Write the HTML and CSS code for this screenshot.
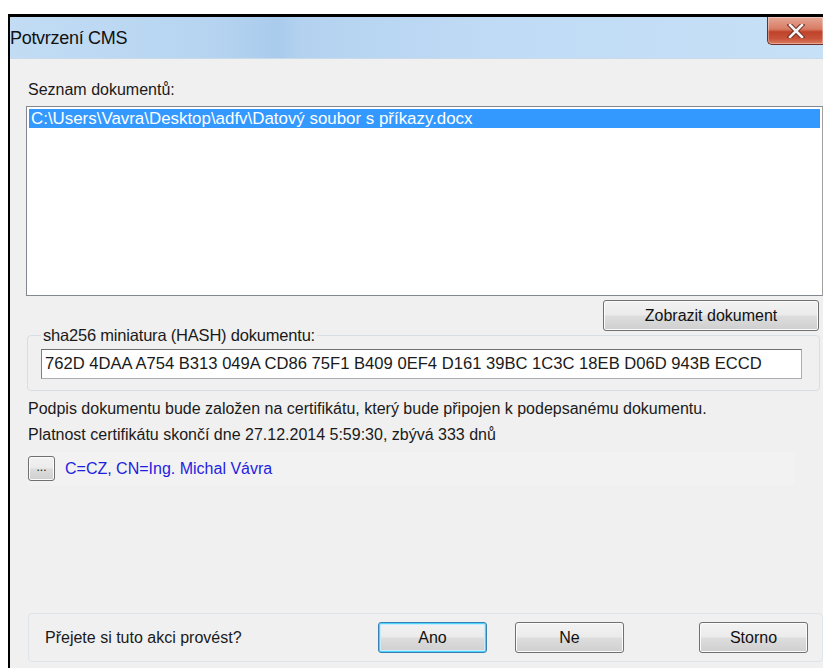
FILE: index.html
```html
<!DOCTYPE html>
<html lang="cs">
<head>
<meta charset="utf-8">
<title>Potvrzení CMS</title>
<link rel="stylesheet" href="styles.css">
</head>
<body>
<div class="window">
  <div class="titlebar">
    <span class="title">Potvrzení CMS</span>
    <button class="close" aria-label="Zavřít">
      <svg width="18" height="14" viewBox="0 0 18 14">
        <path d="M3 1 L15 13 M15 1 L3 13" stroke="#6b2a20" stroke-width="4.5" stroke-linecap="square" fill="none"/>
        <path d="M3 1 L15 13 M15 1 L3 13" stroke="#f4f4f4" stroke-width="2.6" stroke-linecap="square" fill="none"/>
      </svg>
    </button>
  </div>
  <div class="content">
    <div class="label list-label">Seznam dokumentů:</div>
    <div class="listbox">
      <div class="item selected">C:\Users\Vavra\Desktop\adfv\Datový soubor s příkazy.docx</div>
    </div>
    <div class="actions">
      <button class="btn btn-show">Zobrazit dokument</button>
    </div>
    <fieldset class="group hash-group">
      <legend>sha256 miniatura (HASH) dokumentu:</legend>
      <div class="hash-input">762D 4DAA A754 B313 049A CD86 75F1 B409 0EF4 D161 39BC 1C3C 18EB D06D 943B ECCD</div>
    </fieldset>
    <p class="info">Podpis dokumentu bude založen na certifikátu, který bude připojen k podepsanému dokumentu.</p>
    <p class="info">Platnost certifikátu skončí dne 27.12.2014 5:59:30, zbývá 333 dnů</p>
    <div class="cert-row">
      <button class="btn btn-small">...</button>
      <span class="cert-name">C=CZ, CN=Ing. Michal Vávra</span>
    </div>
    <div class="spacer"></div>
    <div class="confirm">
      <span class="question">Přejete si tuto akci provést?</span>
      <button class="btn btn-default btn-ano">Ano</button>
      <button class="btn btn-ne">Ne</button>
      <button class="btn btn-storno">Storno</button>
    </div>
  </div>
</div>
</body>
</html>
```

FILE: styles.css
```css
html, body {
  margin: 0;
  padding: 0;
  background: #ffffff;
  height: 100%;
  overflow: hidden;
}

body {
  font-family: "Liberation Sans", Arial, sans-serif;
  font-size: 16px;
  color: #1a1a1a;
}

.window {
  margin: 14px 0 0 8px;
  border-left: 2px solid #000;
  border-top: 3px solid #000;
  height: 654px;
  box-sizing: border-box;
  display: flex;
  flex-direction: column;
  background: #f0f0f0;
}

.titlebar {
  height: 41px;
  flex: none;
  display: flex;
  align-items: flex-start;
  background: linear-gradient(90deg, #c2dcf4 0%, #b6d4f1 25%, #a9cbec 33%, #b4d2f0 36%, #c0dbf5 60%, #c6e0f7 100%);
  border-bottom: 1px solid #c9d9e8;
}

.title {
  margin: 11px 0 0 0;
  font-size: 18px;
  color: #111;
  letter-spacing: -0.3px;
}

.close {
  margin-left: auto;
  width: 56px;
  height: 28px;
  border: 1px solid #6d2e27;
  border-top: none;
  border-right: none;
  border-radius: 0 0 0 5px;
  background: linear-gradient(180deg, #e6a796 0%, #d87b63 45%, #c0432a 55%, #c7533a 80%, #dc7d60 100%);
  display: flex;
  align-items: center;
  justify-content: center;
  padding: 0;
  box-shadow: inset 0 0 0 1px rgba(255,255,255,0.35);
}

.content {
  flex: 1;
  display: flex;
  flex-direction: column;
  padding: 0 0 0 16px;
}

.label {
  line-height: 18px;
}

.list-label {
  margin: 22px 0 0 2px;
}

.listbox {
  margin-top: 7px;
  height: 190px;
  background: #fff;
  border: 1px solid #828790;
  border-right-color: #a0a0a0;
  box-sizing: border-box;
  padding: 2px 2px 0 2px;
}

.item {
  line-height: 19px;
  padding-left: 2px;
  font-size: 16.9px;
}

.item.selected {
  background: #3399ff;
  color: #fff;
}

.actions {
  display: flex;
  justify-content: flex-end;
  padding-right: 4px;
  margin-top: 4px;
}

.btn {
  font-family: inherit;
  font-size: 16px;
  color: #111;
  border: 1px solid #707070;
  border-radius: 3px;
  background: linear-gradient(180deg, #f2f2f2 0%, #ebebeb 48%, #dddddd 52%, #cfcfcf 100%);
  box-shadow: inset 0 0 0 1px #fbfbfb;
  padding: 0;
  cursor: default;
}

.btn-show {
  width: 216px;
  height: 31px;
}

.group {
  margin: -5px 3px 0 1px;
  border: 1px solid #d5dfe5;
  border-radius: 4px;
  padding: 0 17px 11px 13px;
  min-width: 0;
}

.group legend {
  padding: 0 2px;
  margin-left: 0;
  font-size: 16.5px;
  letter-spacing: -0.2px;
  line-height: 18px;
}

.hash-input {
  margin-top: 5px;
  height: 30px;
  box-sizing: border-box;
  background: #fff;
  border: 1px solid #abadb3;
  border-top-color: #707070;
  border-left-color: #808080;
  line-height: 28px;
  padding-left: 3px;
  white-space: nowrap;
  overflow: hidden;
  font-size: 16.6px;
}

.info {
  margin: 0 0 0 2px;
  line-height: 26px;
}

.info:first-of-type {
  margin-top: 5px;
}

.cert-row {
  margin: 4px 0 0 2px;
  width: 767px;
  height: 33px;
  background: #f2f2f2;
  display: flex;
  align-items: center;
}

.btn-small {
  width: 27px;
  height: 25px;
  font-size: 12px;
  line-height: 18px;
  padding-bottom: 4px;
}

.cert-name {
  margin-left: 10px;
  color: #1e1ee0;
}

.spacer {
  flex: 1;
}

.confirm {
  margin: 0 0 6px 2px;
  height: 49px;
  border: 1px solid #dde5ea;
  border-radius: 4px;
  display: flex;
  align-items: center;
  box-sizing: border-box;
}

.question {
  margin-left: 16px;
  width: 333px;
  flex: none;
}

.btn-ano, .btn-ne, .btn-storno {
  width: 109px;
  height: 31px;
  flex: none;
}

.btn-default {
  border: 1px solid #3c7fb1;
  box-shadow: inset 0 0 0 1px #48d4fd, inset 0 0 0 2px #c8ecfb;
}

.btn-ne {
  margin-left: 28px;
}

.btn-storno {
  margin-left: 75px;
}
```
